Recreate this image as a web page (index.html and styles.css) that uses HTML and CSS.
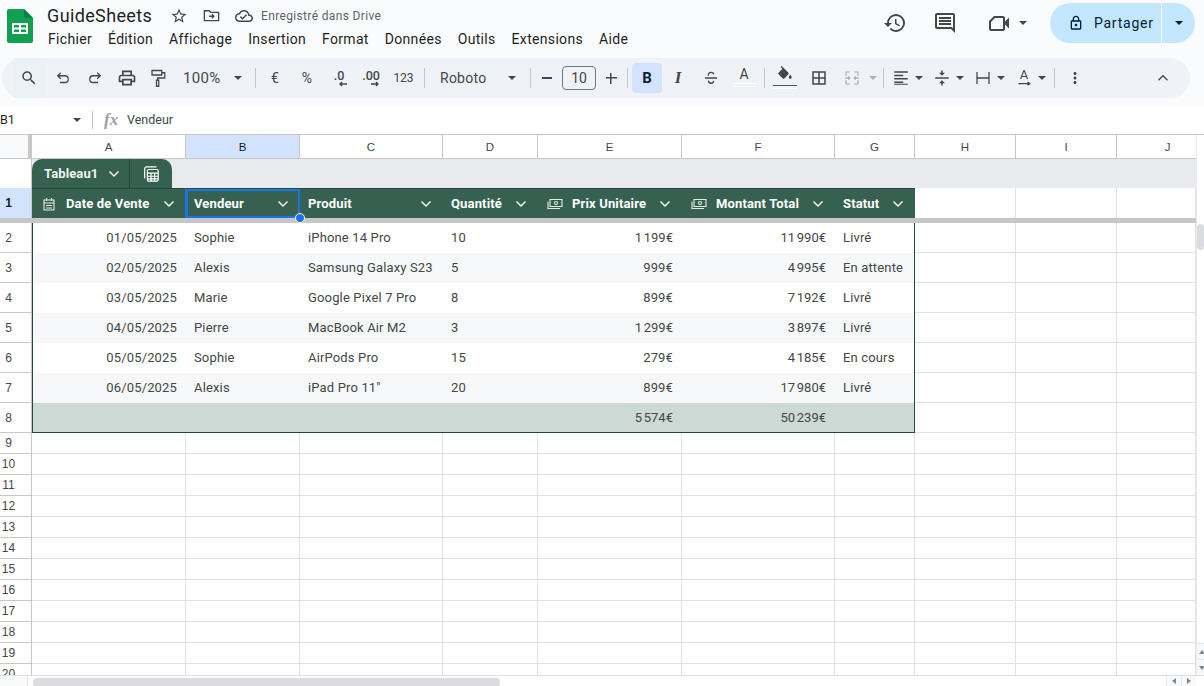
FILE: index.html
```html
<!DOCTYPE html>
<html lang="fr">
<head>
<meta charset="utf-8">
<title>GuideSheets</title>
<link rel="stylesheet" href="styles.css">
</head>
<body>
<header class="top">
  <svg class="logo" viewBox="0 0 26 34"><path fill="#10a04f" d="M2 0h15l9 9v23a2 2 0 0 1-2 2H2a2 2 0 0 1-2-2V2a2 2 0 0 1 2-2z"/><path fill="#0b8043" d="M17 0l9 9h-7a2 2 0 0 1-2-2z"/><path fill="#fff" d="M5 14h16v11H5zm2 2v2.5h5V16zm7 0v2.5h5V16zm-7 4.500V23h5v-2.500zm7 0V23h5v-2.500z"/></svg>
  <div class="titles">
    <div class="title-row">
      <span class="doc-name">GuideSheets</span>
      <svg class="ic i-star" viewBox="0 0 24 24"><path d="M22 9.240l-7.190-.62L12 2 9.190 8.630 2 9.240l5.460 4.730L5.820 21 12 17.270 18.180 21l-1.630-7.030L22 9.240zM12 15.400l-3.760 2.270 1-4.280-3.320-2.880 4.380-.38L12 6.100l1.710 4.040 4.380.38-3.320 2.880 1 4.280L12 15.400z"/></svg>
      <svg class="ic i-folder" viewBox="0 0 24 24"><path class="ln" d="M3 18.500V6h6l2 2h10v10.500z"/><path class="ln" d="M9 13h6M12.500 10.500L15 13l-2.500 2.500"/></svg>
      <svg class="ic i-cloud" viewBox="0 0 24 24"><path d="M19.350 10.040C18.670 6.590 15.640 4 12 4 9.110 4 6.600 5.640 5.350 8.040 2.340 8.360 0 10.910 0 14c0 3.310 2.690 6 6 6h13c2.760 0 5-2.240 5-5 0-2.640-2.050-4.780-4.650-4.960zM19 18H6c-2.210 0-4-1.790-4-4 0-2.050 1.530-3.760 3.560-3.970l1.070-.11.5-.95C8.080 7.140 9.940 6 12 6c2.620 0 4.880 1.860 5.390 4.430l.3 1.500 1.530.11c1.560.1 2.780 1.410 2.780 2.960 0 1.650-1.350 3-3 3zm-9-3.820l-2.090-2.090L6.500 13.500 10 17l6.010-6.010-1.410-1.410z"/></svg>
      <span class="saved">Enregistré dans Drive</span>
    </div>
    <nav class="menu"><span>Fichier</span><span>Édition</span><span>Affichage</span><span>Insertion</span><span>Format</span><span>Données</span><span>Outils</span><span>Extensions</span><span>Aide</span></nav>
  </div>
  <div class="actions">
    <svg class="ic act a-hist" viewBox="0 0 24 24"><path d="M13 3a9 9 0 0 0-9 9H1l3.890 3.890.07.14L9 12H6c0-3.870 3.130-7 7-7s7 3.130 7 7-3.130 7-7 7c-1.930 0-3.680-.79-4.940-2.060l-1.420 1.420A8.954 8.954 0 0 0 13 21a9 9 0 0 0 0-18zm-1 5v5l4.280 2.540.72-1.210-3.500-2.080V8H12z"/></svg>
    <svg class="ic act a-com" viewBox="0 0 24 24"><path d="M21.990 4c0-1.100-.89-2-1.990-2H4c-1.100 0-2 .9-2 2v12c0 1.100.9 2 2 2h14l4 4-.01-18zM20 4v13.170L18.830 16H4V4h16zM6 12h12v2H6zm0-3h12v2H6zm0-3h12v2H6z"/></svg>
    <svg class="ic act a-vid" viewBox="0 0 24 24"><path d="M18 10.480V7c0-1.100-.9-2-2-2H7L2 10v8c0 1.100.9 2 2 2h12c1.100 0 2-.9 2-2v-4.480l4 3.980v-11l-4 3.980zM16 18H4v-7l4-4h8z"/></svg>
    <span class="caret a-caret"></span>
    <div class="share">
      <div class="share-main">
        <svg class="i-lock" viewBox="0 0 24 24"><path d="M18 8h-1V6c0-2.760-2.240-5-5-5S7 3.240 7 6v2H6c-1.100 0-2 .9-2 2v10c0 1.100.9 2 2 2h12c1.100 0 2-.9 2-2V10c0-1.100-.9-2-2-2zM9 6c0-1.660 1.340-3 3-3s3 1.340 3 3v2H9V6zm9 14H6V10h12v10zm-6-3c1.100 0 2-.9 2-2s-.9-2-2-2-2 .9-2 2 .9 2 2 2z"/></svg>
        <span>Partager</span>
      </div>
      <div class="share-more"><span class="caret dark"></span></div>
    </div>
  </div>
</header>

<div class="toolbar-wrap">
  <div class="toolbar">
    <div class="tb w32 start"><svg class="ti" viewBox="0 0 24 24"><path d="M15.500 14h-.79l-.28-.27A6.471 6.471 0 0 0 16 9.500 6.500 6.500 0 1 0 9.500 16c1.610 0 3.090-.59 4.230-1.570l.27.28v.79l5 4.990L20.490 19l-4.990-5zm-6 0C7.010 14 5 11.990 5 9.500S7.010 5 9.500 5 14 7.010 14 9.500 11.990 14 9.500 14z"/></svg></div>
    <div class="tb w32 m2"><svg class="ti" viewBox="0 0 24 24"><path class="ln" d="M9 5L5 9l4 4M5 9h9.500a4.500 4.500 0 0 1 0 9H8"/></svg></div>
    <div class="tb w32"><svg class="ti" viewBox="0 0 24 24"><path class="ln" d="M15 5l4 4-4 4M19 9H9.500a4.500 4.500 0 0 0 0 9H16"/></svg></div>
    <div class="tb w32"><svg class="ti big" viewBox="0 0 24 24"><path d="M19 8h-1V3H6v5H5c-1.660 0-3 1.340-3 3v6h4v4h12v-4h4v-6c0-1.660-1.340-3-3-3zM8 5h8v3H8V5zm8 12v2H8v-4h8v2zm2-2v-2H6v2H4v-4c0-.55.45-1 1-1h14c.55 0 1 .45 1 1v4h-2z"/></svg></div>
    <div class="tb w30"><svg class="ti" viewBox="0 0 24 24"><path class="ln" d="M4 2h13v6H4zM17 5h4v7h-9.500v3M10 15h3V23h-3z"/></svg></div>
    <div class="tb zoom"><span>100%</span><span class="caret"></span></div>
    <span class="sep s5"></span>
    <div class="tb w32 m3 txt">€</div>
    <div class="tb w32 txt">%</div>
    <div class="tb w32 dec"><span>.0</span><svg viewBox="0 0 10 6"><path class="ln" d="M9 3H2M4 1L2 3l2 2"/></svg></div>
    <div class="tb w32 dec"><span>.00</span><svg viewBox="0 0 10 6"><path class="ln" d="M1 3h7M6 1l2 2-2 2"/></svg></div>
    <div class="tb w33 txt small">123</div>
    <span class="sep s4"></span>
    <div class="tb font"><span>Roboto</span><span class="caret"></span></div>
    <span class="sep"></span>
    <div class="tb w28 m2"><span class="minus"></span></div>
    <div class="size">10</div>
    <div class="tb w28 m1"><span class="plus"></span></div>
    <span class="sep s2"></span>
    <div class="tb w30 m4 bold">B</div>
    <div class="tb w30 m1 ital">I</div>
    <div class="tb w30 m3"><svg class="ti" viewBox="0 0 24 24"><path class="ln" d="M4 12h16M8.500 9c-.6-3 1.500-4.500 3.500-4.500s3.500 1 3.800 2.500M8.500 15.500c.2 2 1.500 3.500 3.500 3.500s3.500-1.500 3.500-3.500"/></svg></div>
    <div class="tb w30 m3 color"><span>A</span><span class="under"></span></div>
    <span class="sep s5"></span>
    <div class="tb w30 m5 fill"><svg class="ti" viewBox="0 0 24 24"><path d="M16.560 8.940L7.620 0 6.210 1.410l2.380 2.380-5.150 5.150c-.59.59-.59 1.540 0 2.120l5.500 5.500c.29.29.68.44 1.060.44s.77-.15 1.060-.44l5.500-5.500c.59-.58.59-1.530 0-2.120zM19 11.500s-2 2.170-2 3.500c0 1.100.9 2 2 2s2-.9 2-2c0-1.330-2-3.500-2-3.500z"/></svg><span class="under green"></span></div>
    <div class="tb w30 m4"><svg class="ti" viewBox="0 0 24 24"><path d="M3 3v18h18V3H3zm8 16H5v-6h6v6zm0-8H5V5h6v6zm8 8h-6v-6h6v6zm0-8h-6V5h6v6z"/></svg></div>
    <div class="tb w30 m3 off"><svg class="ti" viewBox="0 0 24 24"><path class="ln dash" d="M4 9V4h5M15 4h5v5M20 15v5h-5M9 20H4v-5"/><path class="ln" d="M3 12h6M7 10l2 2-2 2M21 12h-6M17 10l-2 2 2 2"/></svg></div>
    <div class="tb w12"><span class="caret faint"></span></div>
    <span class="sep s4"></span>
    <div class="tb w26 m4"><svg class="ti" viewBox="0 0 24 24"><path d="M3 3h18v2H3zM3 7.500h12v2H3zM3 12h18v2H3zM3 16.500h12v2H3zM3 21h18v-1.200H3z"/></svg></div>
    <div class="tb w10"><span class="caret"></span></div>
    <div class="tb w26 m5"><svg class="ti" viewBox="0 0 24 24"><path d="M3 11h18v2H3zM11 2h2v3h3l-4 4-4-4h3zM8 19l4-4 4 4h-3v3h-2v-3z"/></svg></div>
    <div class="tb w10"><span class="caret"></span></div>
    <div class="tb w26 m5"><svg class="ti" viewBox="0 0 24 24"><path class="ln" d="M4 4v16M20 4v16M4 12h16"/></svg></div>
    <div class="tb w10"><span class="caret"></span></div>
    <div class="tb w26 m5 rot"><span>A</span><svg viewBox="0 0 20 7"><path class="ln" d="M2 3h15M14 1l3 2-3 2"/></svg></div>
    <div class="tb w10"><span class="caret"></span></div>
    <span class="sep s7"></span>
    <div class="tb w30 m5"><svg class="ti" viewBox="0 0 24 24"><path d="M12 8c1.100 0 2-.9 2-2s-.9-2-2-2-2 .9-2 2 .9 2 2 2zm0 2c-1.100 0-2 .9-2 2s.9 2 2 2 2-.9 2-2-.9-2-2-2zm0 6c-1.100 0-2 .9-2 2s.9 2 2 2 2-.9 2-2-.9-2-2-2z"/></svg></div>
    <div class="tb w30 collapse"><svg class="ti" viewBox="0 0 24 24"><path class="ln" d="M6 15l6-6 6 6"/></svg></div>
  </div>
</div>

<div class="formula">
  <div class="name-box"><span>B1</span><span class="caret"></span></div>
  <span class="f-sep"></span>
  <span class="fx">fx</span>
  <span class="f-val">Vendeur</span>
</div>

<div class="sheet">
  <div class="grid">
    <div class="row cols">
      <div class="corner"></div><div>A</div><div class="sel">B</div><div>C</div><div>D</div><div>E</div><div>F</div><div>G</div><div>H</div><div>I</div><div class="cut">J</div>
    </div>
    <div class="tab-row">
      <div class="rh blank"></div>
      <div class="band">
        <div class="tab">
          <div class="tab-name"><span>Tableau1</span><svg class="chev" viewBox="0 0 12 8"><path d="M1.500 1.500L6 6l4.500-4.500"/></svg></div>
          <div class="tab-calc"><svg viewBox="0 0 20 20"><path d="M3 15V4a2 2 0 0 1 2-2h11"/><rect x="6" y="5" width="12" height="13" rx="1.500"/><path d="M6 9h12M6 12.500h12M6 15.500h12M10 9v9M14 9v9"/></svg></div>
        </div>
      </div>
    </div>
    <div class="row r-head">
      <div class="rh sel">1</div>
      <div class="th"><svg class="thi cal" viewBox="0 0 14 14"><path d="M2 3h10v10H2zM2 6h10M4.500 1v3M9.500 1v3M4 8.500h6M4 11h6"/></svg><span class="l12">Date de Vente</span><svg class="chev" viewBox="0 0 12 8"><path d="M1.500 1.500L6 6l4.500-4.500"/></svg></div>
      <div class="th active"><span>Vendeur</span><svg class="chev" viewBox="0 0 12 8"><path d="M1.500 1.500L6 6l4.500-4.500"/></svg><span class="handle"></span></div>
      <div class="th"><span>Produit</span><svg class="chev" viewBox="0 0 12 8"><path d="M1.500 1.500L6 6l4.500-4.500"/></svg></div>
      <div class="th"><span>Quantité</span><svg class="chev" viewBox="0 0 12 8"><path d="M1.500 1.500L6 6l4.500-4.500"/></svg></div>
      <div class="th"><svg class="thi cash" viewBox="0 0 16 12"><path d="M3 1.500h12v7H3zM1 3.500v7h12"/><circle cx="9" cy="5" r="1.500"/></svg><span class="l10">Prix Unitaire</span><svg class="chev" viewBox="0 0 12 8"><path d="M1.500 1.500L6 6l4.500-4.500"/></svg></div>
      <div class="th"><svg class="thi cash" viewBox="0 0 16 12"><path d="M3 1.500h12v7H3zM1 3.500v7h12"/><circle cx="9" cy="5" r="1.500"/></svg><span class="l10">Montant Total</span><svg class="chev" viewBox="0 0 12 8"><path d="M1.500 1.500L6 6l4.500-4.500"/></svg></div>
      <div class="th"><span>Statut</span><svg class="chev" viewBox="0 0 12 8"><path d="M1.500 1.500L6 6l4.500-4.500"/></svg></div>
      <div class="out"></div><div class="out"></div><div class="out"></div>
    </div>
    <div class="freeze"></div>
    <div class="row data">
      <div class="rh">2</div><div class="num first">01/05/2025</div><div>Sophie</div><div>iPhone 14 Pro</div><div>10</div><div class="num">1&#8239;199€</div><div class="num">11&#8239;990€</div><div class="last">Livré</div><div class="out"></div><div class="out"></div><div class="out"></div>
    </div>
    <div class="row data alt">
      <div class="rh">3</div><div class="num first">02/05/2025</div><div>Alexis</div><div>Samsung Galaxy S23</div><div>5</div><div class="num">999€</div><div class="num">4&#8239;995€</div><div class="last">En attente</div><div class="out"></div><div class="out"></div><div class="out"></div>
    </div>
    <div class="row data">
      <div class="rh">4</div><div class="num first">03/05/2025</div><div>Marie</div><div>Google Pixel 7 Pro</div><div>8</div><div class="num">899€</div><div class="num">7&#8239;192€</div><div class="last">Livré</div><div class="out"></div><div class="out"></div><div class="out"></div>
    </div>
    <div class="row data alt">
      <div class="rh">5</div><div class="num first">04/05/2025</div><div>Pierre</div><div>MacBook Air M2</div><div>3</div><div class="num">1&#8239;299€</div><div class="num">3&#8239;897€</div><div class="last">Livré</div><div class="out"></div><div class="out"></div><div class="out"></div>
    </div>
    <div class="row data">
      <div class="rh">6</div><div class="num first">05/05/2025</div><div>Sophie</div><div>AirPods Pro</div><div>15</div><div class="num">279€</div><div class="num">4&#8239;185€</div><div class="last">En cours</div><div class="out"></div><div class="out"></div><div class="out"></div>
    </div>
    <div class="row data alt">
      <div class="rh">7</div><div class="num first">06/05/2025</div><div>Alexis</div><div>iPad Pro 11"</div><div>20</div><div class="num">899€</div><div class="num">17&#8239;980€</div><div class="last">Livré</div><div class="out"></div><div class="out"></div><div class="out"></div>
    </div>
    <div class="row data total">
      <div class="rh">8</div><div class="first"></div><div></div><div></div><div></div><div class="num">5&#8239;574€</div><div class="num">50&#8239;239€</div><div class="last"></div><div class="out"></div><div class="out"></div><div class="out"></div>
    </div>
    <div class="row empty"><div class="rh">9</div><div></div><div></div><div></div><div></div><div></div><div></div><div></div><div></div><div></div><div></div></div>
    <div class="row empty"><div class="rh">10</div><div></div><div></div><div></div><div></div><div></div><div></div><div></div><div></div><div></div><div></div></div>
    <div class="row empty"><div class="rh">11</div><div></div><div></div><div></div><div></div><div></div><div></div><div></div><div></div><div></div><div></div></div>
    <div class="row empty"><div class="rh">12</div><div></div><div></div><div></div><div></div><div></div><div></div><div></div><div></div><div></div><div></div></div>
    <div class="row empty"><div class="rh">13</div><div></div><div></div><div></div><div></div><div></div><div></div><div></div><div></div><div></div><div></div></div>
    <div class="row empty"><div class="rh">14</div><div></div><div></div><div></div><div></div><div></div><div></div><div></div><div></div><div></div><div></div></div>
    <div class="row empty"><div class="rh">15</div><div></div><div></div><div></div><div></div><div></div><div></div><div></div><div></div><div></div><div></div></div>
    <div class="row empty"><div class="rh">16</div><div></div><div></div><div></div><div></div><div></div><div></div><div></div><div></div><div></div><div></div></div>
    <div class="row empty"><div class="rh">17</div><div></div><div></div><div></div><div></div><div></div><div></div><div></div><div></div><div></div><div></div></div>
    <div class="row empty"><div class="rh">18</div><div></div><div></div><div></div><div></div><div></div><div></div><div></div><div></div><div></div><div></div></div>
    <div class="row empty"><div class="rh">19</div><div></div><div></div><div></div><div></div><div></div><div></div><div></div><div></div><div></div><div></div></div>
    <div class="row empty"><div class="rh">20</div><div></div><div></div><div></div><div></div><div></div><div></div><div></div><div></div><div></div><div></div></div>
  </div>
  <div class="vscroll">
    <div class="v-thumb"></div>
    <div class="v-btn"><span class="tri up"></span></div>
    <div class="v-btn"><span class="tri down"></span></div>
  </div>
</div>

<div class="hscroll">
  <div class="h-corner"></div>
  <div class="h-thumb"></div>
  <div class="h-btn"><span class="tri left"></span></div>
  <div class="h-btn"><span class="tri right"></span></div>
</div>
</body>
</html>
```
FILE: styles.css
```css
* { box-sizing: border-box; }
html, body { margin: 0; padding: 0; }
body {
  width: 1204px;
  height: 686px;
  overflow: hidden;
  display: flex;
  flex-direction: column;
  background: #fff;
  font-family: Roboto, "Liberation Sans", sans-serif;
  color: #444746;
}
svg { display: block; flex: none; }
.ln { fill: none; stroke: currentColor; stroke-width: 1.700; }

/* Header */
.top { height: 58px; display: flex; background: #f9fbfd; padding-left: 7px; flex: none; }
.logo { width: 26px; height: 34px; margin-top: 9px; }
.titles { margin-left: 14px; display: flex; flex-direction: column; }
.title-row { height: 28px; padding-top: 3px; display: flex; align-items: center; }
.doc-name { font-size: 18px; color: #1f1f1f; width: 105px; letter-spacing: .37px; white-space: nowrap; }
.ic { fill: currentColor; color: #444746; }
.i-star { width: 18px; height: 18px; margin-left: 18px; }
.i-folder { width: 19px; height: 19px; margin-left: 14px; }
.i-cloud { width: 18px; height: 18px; margin-left: 14px; }
.saved { font-size: 12px; color: #5f6368; margin-left: 8px; letter-spacing: .35px; }
.menu { display: flex; gap: 16px; font-size: 14px; color: #1f1f1f; margin-left: 1px; padding-top: 2px; line-height: 18px; letter-spacing: .32px; }
.actions { margin-left: auto; display: flex; align-items: flex-start; padding-top: 3px; padding-right: 9px; }
.act { width: 24px; height: 24px; margin-top: 8px; }
.a-hist { margin-right: 26px; }
.a-com { margin-right: 30px; }
.a-caret { margin: 18px 0 0 8px; }
.share { margin-left: 23px; width: 145px; height: 40px; display: flex; border-radius: 20px; overflow: hidden; background: #c2e7ff; }
.share-main { width: 112px; display: flex; align-items: center; padding-left: 18px; font-size: 14px; font-weight: 400; color: #001d35; letter-spacing: .75px; gap: 10px; border-right: 1px solid #f9fbfd; }
.i-lock { width: 16px; height: 18px; fill: #001d35; }
.share-more { flex: 1; display: flex; align-items: center; justify-content: center; }
.caret { display: inline-block; width: 0; height: 0; border: 4px solid transparent; border-top: 4px solid #444746; border-bottom: 0; flex: none; }
.caret.dark { border-top-color: #001d35; }
.caret.faint { border-top-color: #b0b3b6; }

/* Toolbar */
.toolbar-wrap { height: 48px; background: #f9fbfd; padding-left: 2px; padding-right: 14px; flex: none; }
.toolbar { height: 40px; background: #eff3f8; border-radius: 20px; display: flex; align-items: center; padding-left: 11px; color: #444746; }
.tb { height: 40px; display: flex; align-items: center; justify-content: center; flex: none; }
.ti { width: 18px; height: 18px; fill: currentColor; }
.ti.big { width: 20px; height: 20px; }
.start { background: #ecf1f8; }
.w10 { width: 10px; } .w12 { width: 12px; } .w26 { width: 26px; } .w28 { width: 28px; }
.w30 { width: 30px; } .w32 { width: 32px; } .w33 { width: 33px; }
.m1 { margin-left: 1px; } .m2 { margin-left: 2px; } .m3 { margin-left: 3px; } .m4 { margin-left: 4px; } .m5 { margin-left: 5px; }
.sep { width: 1px; height: 20px; background: #c7c7c7; flex: none; }
.s2 { margin-left: 2px; } .s4 { margin-left: 4px; } .s5 { margin-left: 5px; } .s7 { margin-left: 7px; }
.zoom { width: 77px; font-size: 15px; padding: 0 8px 0 10px; justify-content: space-between; letter-spacing: .3px; }
.txt { font-size: 14px; }
.txt.small { font-size: 12px; }
.dec { position: relative; flex-direction: column; font-size: 12.500px; font-weight: 500; line-height: 11px; }
.dec svg { width: 10px; height: 6px; margin: 0 -7px 0 0; }
.dec .ln { stroke-width: 1.400; }
.font { width: 105px; font-size: 14px; padding: 0 14px 0 15px; justify-content: space-between; letter-spacing: .25px; }
.minus { width: 10px; height: 1.500px; background: #444746; }
.plus { width: 11px; height: 11px; background: linear-gradient(#444746, #444746) center / 11px 1.500px no-repeat, linear-gradient(#444746, #444746) center / 1.500px 11px no-repeat; }
.size { width: 34px; height: 24px; margin-left: 1px; border: 1px solid #747775; border-radius: 4px; font-size: 14px; display: flex; align-items: center; justify-content: center; flex: none; }
.bold { height: 30px; background: #d3e3fd; border-radius: 4px; font-weight: 700; font-size: 15px; color: #0b1f33; }
.ital { font-family: "Liberation Serif", serif; font-style: italic; font-weight: 700; font-size: 17px; }
.color, .fill { position: relative; flex-direction: column; }
.color { font-size: 14px; line-height: 14px; padding-bottom: 2px; }
.under { width: 23px; height: 4px; border-top: 1px solid #fff; border-bottom: 1px solid #fff; background: transparent; margin-top: 2px; }
.under.green { border-top: 1px solid #2f6b52; border-bottom: 1px solid #fff; width: 24px; margin-top: 0; }
.fill .ti { margin-top: -2px; margin-bottom: 1px; }
.off { color: #a9adb1; }
.dash { stroke-width: 1.500; }
.rot { flex-direction: column; font-size: 13px; line-height: 12px; }
.rot svg { width: 15px; height: 6px; }
.collapse { margin-left: 58px; }

/* Formula bar */
.formula { height: 29px; flex: none; background: #fff; border-bottom: 1px solid #c7c7c7; display: flex; align-items: center; font-size: 12.500px; color: #1f1f1f; padding-bottom: 1px; }
.name-box { width: 92px; padding: 0 11px 0 0; display: flex; justify-content: space-between; align-items: center; }
.f-sep { width: 1px; height: 18px; background: #c7c7c7; }
.fx { font-family: "Liberation Serif", serif; font-style: italic; font-weight: 700; font-size: 17px; color: #9aa0a6; margin-left: 11px; width: 23px; }
.f-val { color: #444746; }

/* Sheet */
.sheet { height: 540px; flex: none; display: flex; }
.grid { width: 1196px; height: 540px; overflow: hidden; }
.row { display: grid; grid-template-columns: 32px 154px 114px 143px 95px 144px 153px 80px 101px 101px 79px; }
.rh { font-family: "Liberation Sans", Arial, sans-serif; font-size: 12px; color: #444746; background: #fff; border-right: 1px solid #c7c7c7; border-bottom: 1px solid #c7c7c7; display: flex; align-items: center; justify-content: center; padding-right: 14px; }
.cols { height: 24px; }
.cols > div { font-family: "Liberation Sans", Arial, sans-serif; font-size: 11.500px; color: #444746; border-right: 1px solid #c7c7c7; border-bottom: 1px solid #c7c7c7; display: flex; align-items: center; justify-content: center; background: #fff; }
.cols > .corner { background: #f8f9fa; border-right-width: 4px; border-bottom-width: 1px; }
.cols > .sel { background: #d3e3fd; color: #0b1f33; }
.cols > .cut { padding-left: 22px; border-right: 0; }
.tab-row { height: 29px; display: flex; }
.rh.blank { width: 32px; border-bottom: 0; padding: 0; }
.band { flex: 1; background: #e8eaed; display: flex; }
.tab { width: 140px; height: 29px; background: #366150; border-radius: 10px 10px 0 0; display: flex; color: #fff; }
.tab-name { width: 98px; display: flex; align-items: center; justify-content: space-between; padding: 0 9px 0 12px; font-size: 13px; font-weight: 700; letter-spacing: .1px; border-right: 1px solid #23493a; color: #f0f4f2; }
.tab-calc { flex: 1; display: flex; align-items: center; justify-content: center; }
.tab-calc svg { width: 18px; height: 18px; fill: none; stroke: #fff; stroke-width: 1.300; }
.chev { width: 12px; height: 8px; fill: none; stroke: #fff; stroke-width: 1.400; flex: none; }
.r-head { height: 30px; }
.rh.sel { background: #d3e3fd; font-weight: 700; color: #0b1f33; border-bottom: 0; }
.th { position: relative; background: #366150; color: #fff; font-size: 13px; font-weight: 700; display: flex; align-items: center; padding: 0 11px 0 8px; border-top: 1px solid #23493a; white-space: nowrap; letter-spacing: .15px; }
.th .chev { margin-left: auto; }
.th.active { box-shadow: inset 0 0 0 2px #1a73e8, -1px 0 0 0 #1a73e8; }
.handle { position: absolute; right: -5px; bottom: -5px; width: 10px; height: 10px; background: #1a73e8; border: 1px solid #fff; border-radius: 50%; z-index: 2; }
.thi { fill: none; stroke: #e4ebe8; stroke-width: 1.100; }
.thi.cal { width: 14px; height: 14px; margin-left: 2px; }
.thi.cash { width: 16px; height: 12px; margin-left: 1px; }
.l12 { margin-left: 10px; }
.l10 { margin-left: 9px; }
.out { border-right: 1px solid #e1e1e1; border-bottom: 1px solid #e1e1e1; background: #fff; }
.r-head .out { border-bottom: 0; }
.freeze { height: 5px; background: #c7c7c7; }
.data { height: 30px; }
.data > div { font-size: 13px; letter-spacing: .15px; color: #444746; display: flex; align-items: center; padding: 0 0 1px 8px; white-space: nowrap; background: #fff; }
.data.alt > div { background: #f6f8f9; }
.data > .rh, .data.alt > .rh { padding: 0 14px 0 0; background: #fff; font-size: 12px; letter-spacing: 0; }
.data > .out, .data.alt > .out { background: #fff; padding: 0; }
.data > .num { justify-content: flex-end; padding: 0 9px 1px 0; }
.data > .first { border-left: 1px solid #23493a; }
.data > .last { border-right: 1px solid #23493a; }
.data.total > div { background: #cdd9d4; border-bottom: 1px solid #23493a; color: #444746; }
.data.total > .rh { background: #fff; border-bottom: 1px solid #c7c7c7; }
.data.total > .out { background: #fff; border-bottom: 1px solid #e1e1e1; }
.empty { height: 21px; }
.empty > div { border-right: 1px solid #e1e1e1; border-bottom: 1px solid #e1e1e1; background: #fff; }
.empty > .rh { border-right: 1px solid #c7c7c7; border-bottom: 1px solid #c7c7c7; }

/* Scrollbars */
.vscroll { width: 8px; display: flex; flex-direction: column; background: #fff; border-left: 1px solid #e8eaed; }
.v-thumb { height: 26px; margin: 89px 0 0 0; background: #dadce0; border-radius: 4px; }
.v-btn { height: 16px; display: flex; align-items: center; justify-content: center; padding-left: 3px; border-top: 1px solid #e8eaed; background: #f8f9fa; }
.v-btn:nth-child(2) { margin-top: auto; }
.tri { width: 0; height: 0; border: 3px solid transparent; }
.tri.up { border-top: 0; border-bottom: 4px solid #80868b; }
.tri.down { border-bottom: 0; border-top: 4px solid #80868b; }
.tri.left { border-left: 0; border-right: 4px solid #80868b; }
.tri.right { border-right: 0; border-left: 4px solid #80868b; }
.hscroll { height: 11px; flex: none; display: flex; align-items: center; background: #fff; border-top: 1px solid #e1e1e1; padding-right: 8px; }
.h-corner { width: 28px; height: 11px; background: #f8f9fa; border-right: 1px solid #e8eaed; margin-right: 5px; flex: none; }
.h-thumb { width: 467px; height: 9px; background: #dadce0; border-radius: 4px; margin-top: 2px; }
.h-btn { width: 15px; height: 11px; display: flex; align-items: center; justify-content: center; border-left: 1px solid #e8eaed; background: #f8f9fa; }
.h-thumb + .h-btn { margin-left: auto; }
```
